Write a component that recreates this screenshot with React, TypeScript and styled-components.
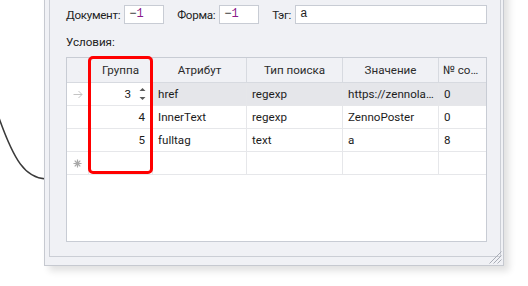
import React from "react";
import styled, { createGlobalStyle } from "styled-components";

const GlobalStyle = createGlobalStyle`
  html, body {
    margin: 0;
    padding: 0;
    background: #ffffff;
  }
  body {
    font-family: Roboto, "Liberation Sans", Arial, sans-serif;
    font-size: 11.6px;
    color: #1f1f1f;
  }
`;

const Page = styled.div`
    position: relative;
    width: 528px;
    height: 286px;
    overflow: hidden;
    background: #ffffff;
`;

const Wire = styled.svg`
    position: absolute;
    left: 0;
    top: 0;
    z-index: 0;
`;

const Window = styled.div`
    position: relative;
    z-index: 1;
    box-sizing: border-box;
    margin: -12px 0 0 44px;
    width: 460px;
    height: 278px;
    padding: 0 2px 8px 4px;
    background: #f0f1f5;
    border: 1px solid #c6c9d0;
    box-shadow: 5px 5px 7px rgba(0, 0, 0, 0.12);
    display: flex;
`;

const Panel = styled.div`
    flex: 1;
    box-sizing: border-box;
    border: 1px solid #cbced5;
    border-top: none;
    padding: 16px 13px 13px 16px;
    display: flex;
    flex-direction: column;
`;

const FormRow = styled.div`
    display: flex;
    align-items: center;
    height: 19px;
`;

const Label = styled.span<{ gapLeft?: number }>`
    margin-left: ${(p) => p.gapLeft ?? 0}px;
    margin-right: 4px;
    flex-shrink: 0;
    white-space: nowrap;
    letter-spacing: -0.3px;
    line-height: 16px;
    color: #222222;
`;

const Field = styled.div<{ w?: number }>`
    box-sizing: border-box;
    height: 19px;
    ${(p) => (p.w ? `width: ${p.w}px;` : "flex: 1;")}
    background: #ffffff;
    border: 1px solid #c8ccd4;
    padding: 0 4px;
    font-family: "Liberation Mono", "DejaVu Sans Mono", monospace;
    font-size: 12px;
    line-height: 17px;
    color: #1e1e1e;
`;

const Num = styled.span`
    color: #8a1a8a;
`;

const Caption = styled.div`
    margin-top: 10px;
    line-height: 16px;
    color: #222222;
`;

const Table = styled.div`
    position: relative;
    box-sizing: border-box;
    margin-top: 7px;
    height: 185px;
    background: #ffffff;
    border: 1px solid #c8ccd4;
`;

const cols = "22px 64px 94px 96px 96px 47px";

const HeadRow = styled.div`
    display: grid;
    grid-template-columns: ${cols};
    height: 25px;
    box-sizing: border-box;
    background: #f0f1f5;
    border-bottom: 1px solid #d7dae0;
`;

const HeadCell = styled.div`
    box-sizing: border-box;
    border-right: 1px solid #d7dae0;
    text-align: center;
    line-height: 24px;
    padding: 0 4px;
    white-space: nowrap;
    overflow: hidden;
    text-overflow: ellipsis;
    color: #2b2b2b;
    &:last-child {
        border-right: none;
    }
`;

const Row = styled.div`
    display: grid;
    grid-template-columns: ${cols};
    height: 23px;
    box-sizing: border-box;
    border-bottom: 1px solid #e6e7ea;
`;

const Cell = styled.div<{ selected?: boolean; right?: boolean }>`
    box-sizing: border-box;
    border-right: 1px solid #e6e7ea;
    background: ${(p) => (p.selected ? "#e5e6ea" : "#ffffff")};
    padding: 0 ${(p) => (p.right ? "7px" : "4px")} 0 ${(p) => (p.right ? "4px" : "5px")};
    text-align: ${(p) => (p.right ? "right" : "left")};
    line-height: 22px;
    white-space: nowrap;
    overflow: hidden;
    text-overflow: ellipsis;
    color: #1c1c1c;
    &:last-child {
        border-right: none;
    }
`;

const Indicator = styled.div`
    box-sizing: border-box;
    border-right: 1px solid #e6e7ea;
    display: flex;
    align-items: center;
    justify-content: center;
    background: #ffffff;
`;

const EditCell = styled.div`
    box-sizing: border-box;
    border-right: 1px solid #e6e7ea;
    display: flex;
    align-items: center;
    justify-content: flex-end;
    gap: 8px;
    padding-right: 6px;
    background: #ffffff;
    line-height: 22px;
    color: #1c1c1c;
`;

const Highlight = styled.div`
    position: absolute;
    left: 21px;
    top: -2px;
    width: 65px;
    height: 118px;
    box-sizing: border-box;
    border: 3px solid #ff0000;
    border-radius: 5px;
    pointer-events: none;
`;

const Grip = styled.svg`
    position: absolute;
    right: 1px;
    bottom: 1px;
`;

const ArrowIcon = () => (
    <svg width="10" height="9" viewBox="0 0 10 9">
        <path d="M0.5 4.5H9M5.5 1L9 4.5L5.5 8" fill="none" stroke="#c4c4c4" strokeWidth="1" />
    </svg>
);

const NewRowIcon = () => (
    <svg width="9" height="9" viewBox="0 0 9 9">
        <g stroke="#a8a8a8" strokeWidth="1.2">
            <path d="M4.5 0.5V8.5M0.5 4.5H8.5M1.7 1.7L7.3 7.3M7.3 1.7L1.7 7.3" />
        </g>
        <circle cx="4.5" cy="4.5" r="2" fill="#a8a8a8" />
    </svg>
);

const Spinner = () => (
    <svg width="7" height="14" viewBox="0 0 7 14">
        <path d="M0.5 4L3.5 1L6.5 4Z" fill="#5a5a5a" />
        <path d="M0.5 10L3.5 13L6.5 10Z" fill="#5a5a5a" />
    </svg>
);

const rows = [
    { group: "4", attr: "InnerText", type: "regexp", value: "ZennoPoster", num: "0" },
    { group: "5", attr: "fulltag", type: "text", value: "a", num: "8" },
];

export default function App() {
    return (
        <>
            <GlobalStyle />
            <Page>
                <Wire width="60" height="200" viewBox="0 0 60 200">
                    <path d="M-1 118 C 14 160, 25 178, 46 179" fill="none" stroke="#3a3a3a" strokeWidth="1.6" />
                </Wire>
                <Window>
                    <Panel>
                        <FormRow>
                            <Label>Документ:</Label>
                            <Field w={40}>
                                −<Num>1</Num>
                            </Field>
                            <Label gapLeft={13}>Форма:</Label>
                            <Field w={40}>
                                −<Num>1</Num>
                            </Field>
                            <Label gapLeft={13}>Тэг:</Label>
                            <Field>a</Field>
                        </FormRow>
                        <Caption>Условия:</Caption>
                        <Table>
                            <HeadRow>
                                <HeadCell />
                                <HeadCell>Группа</HeadCell>
                                <HeadCell>Атрибут</HeadCell>
                                <HeadCell>Тип поиска</HeadCell>
                                <HeadCell>Значение</HeadCell>
                                <HeadCell>№ совпадения</HeadCell>
                            </HeadRow>
                            <Row>
                                <Indicator>
                                    <ArrowIcon />
                                </Indicator>
                                <EditCell>
                                    <span>3</span>
                                    <Spinner />
                                </EditCell>
                                <Cell selected>href</Cell>
                                <Cell selected>regexp</Cell>
                                <Cell selected>https://zennolab.com</Cell>
                                <Cell selected>0</Cell>
                            </Row>
                            {rows.map((r) => (
                                <Row key={r.group}>
                                    <Indicator />
                                    <Cell right>{r.group}</Cell>
                                    <Cell>{r.attr}</Cell>
                                    <Cell>{r.type}</Cell>
                                    <Cell>{r.value}</Cell>
                                    <Cell>{r.num}</Cell>
                                </Row>
                            ))}
                            <Row>
                                <Indicator>
                                    <NewRowIcon />
                                </Indicator>
                                <Cell />
                                <Cell />
                                <Cell />
                                <Cell />
                                <Cell />
                            </Row>
                            <Highlight />
                        </Table>
                    </Panel>
                    <Grip width="14" height="14" viewBox="0 0 14 14">
                        <g stroke="#a9adb6" strokeWidth="1">
                            <path d="M13.5 1.5L1.5 13.5M13.5 5.5L5.5 13.5M13.5 9.5L9.5 13.5" />
                        </g>
                    </Grip>
                </Window>
            </Page>
        </>
    );
}
